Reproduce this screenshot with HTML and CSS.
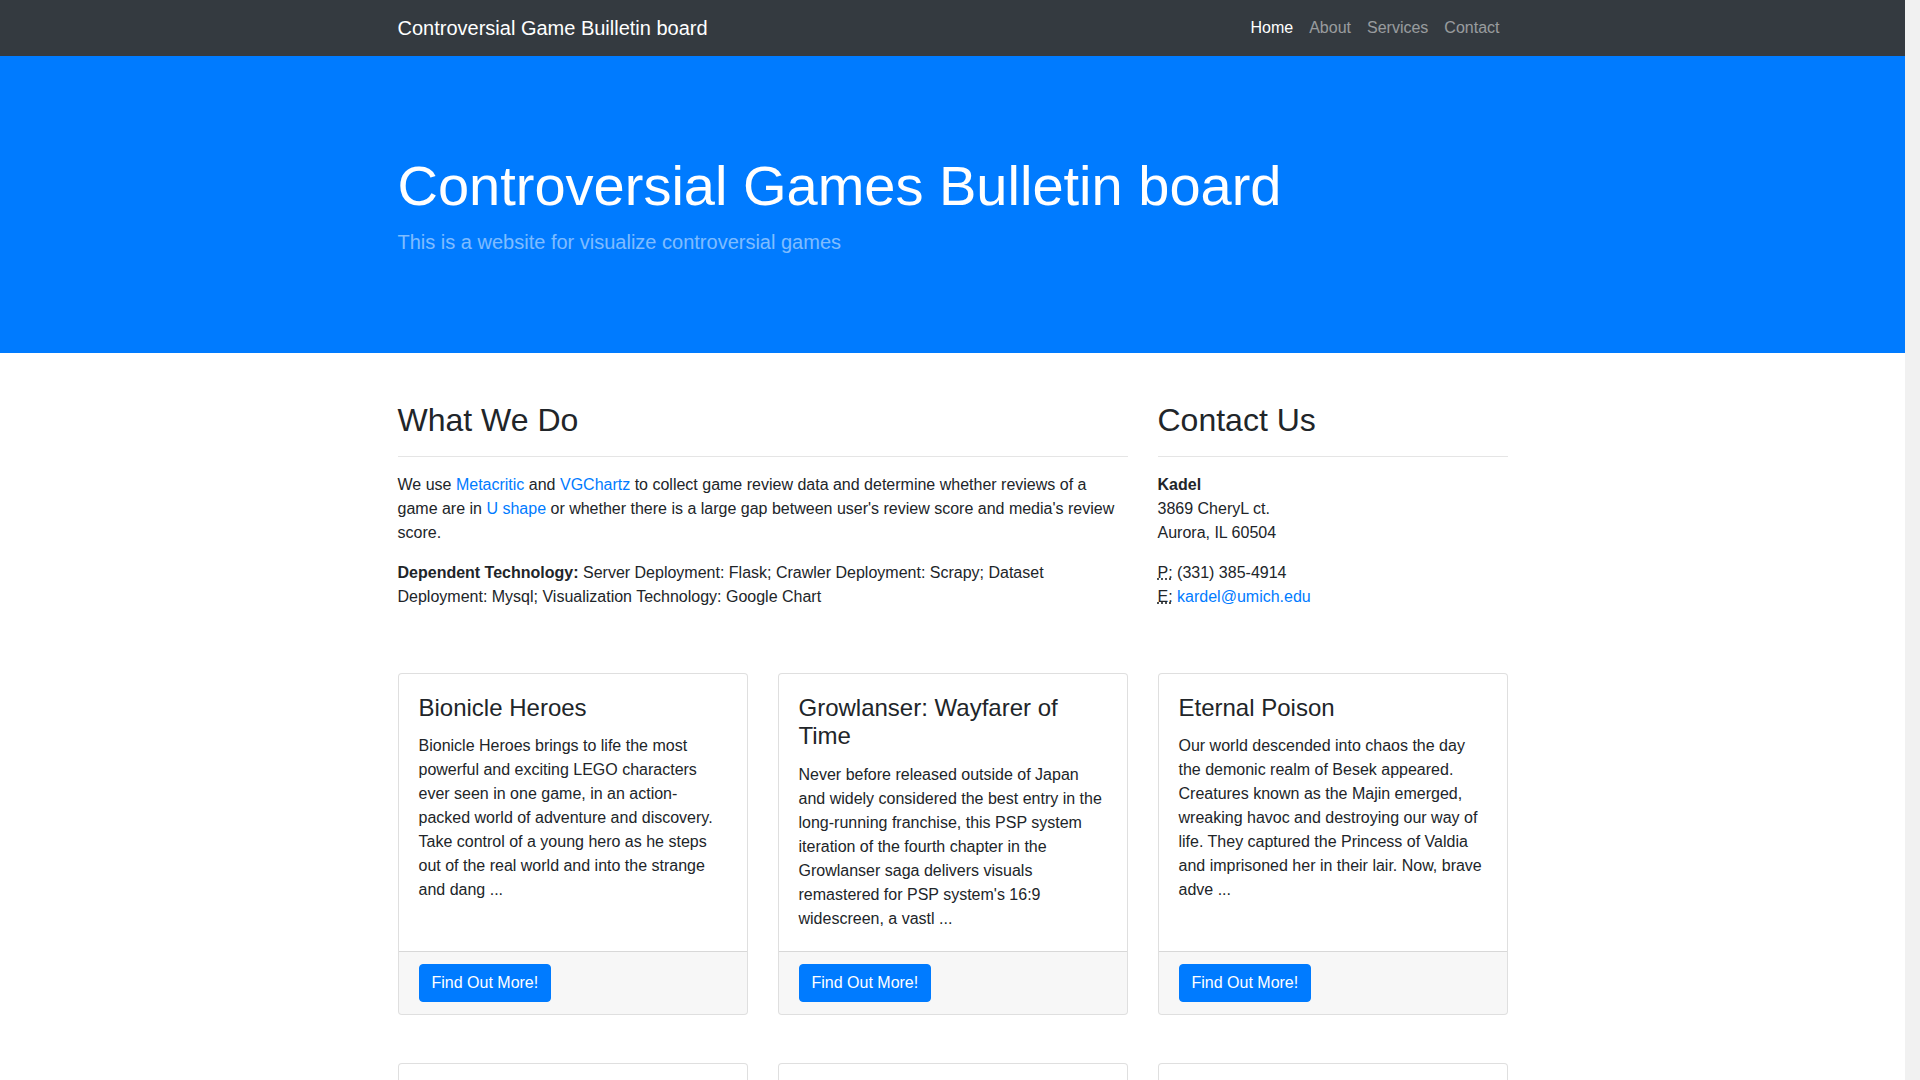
FILE: index.html
```html
<!DOCTYPE html>
<html lang="en">
<head>
<meta charset="utf-8">
<title>Controversial Game Builletin board</title>
<link rel="stylesheet" href="styles.css">
</head>
<body>
<div class="page">
<nav class="navbar">
  <div class="container nav-inner">
    <a class="brand" href="#">Controversial Game Builletin board</a>
    <ul class="nav-links">
      <li><a class="nav-link active" href="#">Home</a></li>
      <li><a class="nav-link" href="#">About</a></li>
      <li><a class="nav-link" href="#">Services</a></li>
      <li><a class="nav-link" href="#">Contact</a></li>
    </ul>
  </div>
</nav>

<header class="hero">
  <div class="container">
    <h1 class="hero-title">Controversial Games Bulletin board</h1>
    <p class="hero-lead">This is a website for visualize controversial games</p>
  </div>
</header>

<main class="container">
  <div class="intro-row">
    <section class="intro-col">
      <h2 class="section-title">What We Do</h2>
      <hr class="rule">
      <p>We use <a href="#">Metacritic</a> and <a href="#">VGChartz</a> to collect game review data and determine whether reviews of a game are in <a href="#">U shape</a> or whether there is a large gap between user's review score and media's review score.</p>
      <p><strong>Dependent Technology:</strong> Server Deployment: Flask; Crawler Deployment: Scrapy; Dataset Deployment: Mysql; Visualization Technology: Google Chart</p>
    </section>
    <section class="intro-col">
      <h2 class="section-title">Contact Us</h2>
      <hr class="rule">
      <address>
        <strong>Kadel</strong><br>3869 CheryL ct.<br>Aurora, IL 60504<br>
      </address>
      <address>
        <abbr title="Phone">P:</abbr> (331) 385-4914<br>
        <abbr title="Email">E:</abbr> <a href="#">kardel@umich.edu</a>
      </address>
    </section>
  </div>

  <div class="card-row">
    <div class="card">
      <div class="card-body">
        <h2 class="card-title">Bionicle Heroes</h2>
        <p class="card-text">Bionicle Heroes brings to life the most powerful and exciting LEGO characters ever seen in one game, in an action-packed world of adventure and discovery. Take control of a young hero as he steps out of the real world and into the strange and dang ...</p>
      </div>
      <div class="card-footer"><a class="btn" href="#">Find Out More!</a></div>
    </div>
    <div class="card">
      <div class="card-body">
        <h2 class="card-title">Growlanser: Wayfarer of Time</h2>
        <p class="card-text">Never before released outside of Japan and widely considered the best entry in the long-running franchise, this PSP system iteration of the fourth chapter in the Growlanser saga delivers visuals remastered for PSP system's 16:9 widescreen, a vastl ...</p>
      </div>
      <div class="card-footer"><a class="btn" href="#">Find Out More!</a></div>
    </div>
    <div class="card">
      <div class="card-body">
        <h2 class="card-title">Eternal Poison</h2>
        <p class="card-text">Our world descended into chaos the day the demonic realm of Besek appeared. Creatures known as the Majin emerged, wreaking havoc and destroying our way of life. They captured the Princess of Valdia and imprisoned her in their lair. Now, brave adve ...</p>
      </div>
      <div class="card-footer"><a class="btn" href="#">Find Out More!</a></div>
    </div>
  </div>

  <div class="card-row">
    <div class="card">
      <div class="card-body">
        <h2 class="card-title">Mass Effect 3</h2>
        <p class="card-text">Earth is burning. Striking from beyond known space, a race of terrifying machines have begun their destruction of the human race. As Commander Shepard, you must forge alliances and lead the counterattack ...</p>
      </div>
      <div class="card-footer"><a class="btn" href="#">Find Out More!</a></div>
    </div>
    <div class="card">
      <div class="card-body">
        <h2 class="card-title">Diablo III</h2>
        <p class="card-text">Twenty years have passed since the Prime Evils were defeated and banished from the world of Sanctuary. Now, you must return to where it all began and investigate rumors of a falling star ...</p>
      </div>
      <div class="card-footer"><a class="btn" href="#">Find Out More!</a></div>
    </div>
    <div class="card">
      <div class="card-body">
        <h2 class="card-title">SimCity</h2>
        <p class="card-text">Create the city you desire and make choices that will shape your city and the world. Build a city of industry, education, tourism or gambling, and see how your decisions affect the region ...</p>
      </div>
      <div class="card-footer"><a class="btn" href="#">Find Out More!</a></div>
    </div>
  </div>
</main>

<footer class="footer">
  <div class="container">
    <p class="copyright">Copyright &copy; Controversial Games Bulletin board 2019</p>
  </div>
</footer>
</div>
</body>
</html>
```

FILE: styles.css
```css
*, *::before, *::after { box-sizing: border-box; }

html { background: #f1f1f1; }

body {
  margin: 0;
  font-family: "Liberation Sans", Arial, sans-serif;
  font-size: 16px;
  line-height: 1.5;
  color: #212529;
}

/* leave room for the scrollbar track seen in the reference */
.page {
  margin-right: 15px;
  background: #fff;
}

a { color: #007bff; text-decoration: none; }

.container {
  width: 1140px;
  padding: 0 15px;
  margin: 0 auto;
}

/* Navbar */
.navbar {
  background: #343a40;
  padding: 8px 0;
}
.nav-inner {
  display: flex;
  align-items: center;
  justify-content: space-between;
}
.brand {
  color: #fff;
  font-size: 20px;
  line-height: 30px;
  padding: 5px 0;
  white-space: nowrap;
}
.nav-links {
  display: flex;
  list-style: none;
  margin: 0;
  padding: 0;
}
.nav-link {
  display: block;
  padding: 8px;
  color: rgba(255, 255, 255, 0.5);
  line-height: 24px;
}
.nav-link.active { color: #fff; }

/* Hero */
.hero {
  background: #007bff;
  padding: 48px 0;
  margin-bottom: 48px;
}
.hero-title {
  margin: 48px 0 8px;
  font-size: 56px;
  font-weight: 300;
  line-height: 1.2;
  color: #fff;
}
.hero-lead {
  margin: 0 0 48px;
  font-size: 20px;
  font-weight: 300;
  line-height: 1.5;
  color: rgba(255, 255, 255, 0.5);
}

/* Intro */
.intro-row {
  display: grid;
  grid-template-columns: 730px 350px;
  column-gap: 30px;
}
.intro-col { margin-bottom: 48px; }
.section-title {
  margin: 0 0 8px;
  font-size: 32px;
  font-weight: 500;
  line-height: 1.2;
}
.rule {
  margin: 16px 0;
  border: 0;
  border-top: 1px solid rgba(0, 0, 0, 0.1);
  height: 0;
}
p { margin: 0 0 16px; }
strong { font-weight: bold; }
address {
  font-style: normal;
  margin: 0 0 16px;
}
abbr[title] {
  text-decoration: underline dotted;
  cursor: help;
}

/* Cards */
.card-row {
  display: grid;
  grid-template-columns: repeat(3, 1fr);
  column-gap: 30px;
}
.card {
  display: flex;
  flex-direction: column;
  margin-bottom: 48px;
  border: 1px solid rgba(0, 0, 0, 0.125);
  border-radius: 4px;
  background: #fff;
}
.card-body {
  flex: 1 1 auto;
  padding: 20px;
}
.card-title {
  margin: 0 0 12px;
  font-size: 24px;
  font-weight: 500;
  line-height: 1.2;
}
.card-text { margin: 0; }
.card-footer {
  padding: 12px 20px;
  background: rgba(0, 0, 0, 0.03);
  border-top: 1px solid rgba(0, 0, 0, 0.125);
  border-radius: 0 0 3px 3px;
}
.btn {
  display: inline-block;
  padding: 6px 12px;
  font-size: 16px;
  line-height: 24px;
  color: #fff;
  background: #007bff;
  border: 1px solid #007bff;
  border-radius: 4px;
}

/* Footer */
.footer {
  background: #343a40;
  padding: 48px 0;
}
.copyright {
  margin: 0;
  text-align: center;
  color: #fff;
}
```
